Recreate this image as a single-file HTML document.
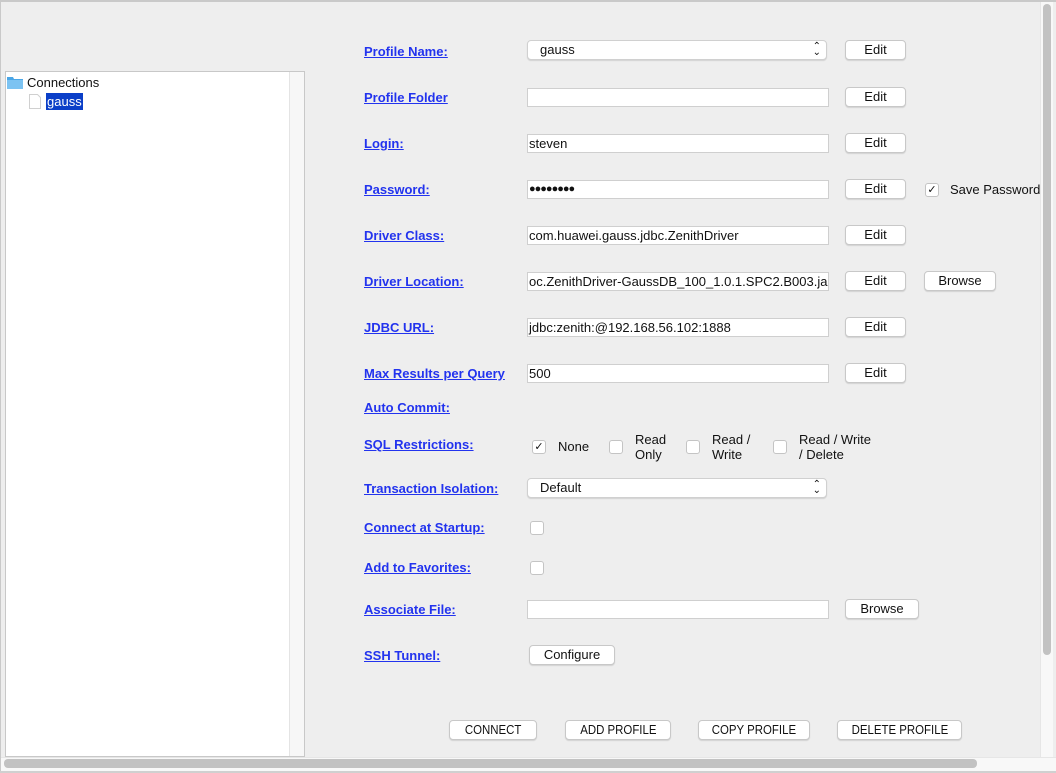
<!DOCTYPE html>
<html><head><meta charset="utf-8"><style>
*{box-sizing:border-box;margin:0;padding:0}
body{width:1056px;height:773px;background:#eeeeee;position:relative;overflow:hidden;font-family:"Liberation Sans","DejaVu Sans",sans-serif;font-size:13px;color:#111}
.a{position:absolute}
.lbl{position:absolute;left:364px;color:#2233ee;font-weight:bold;text-decoration:underline;font-size:13px;line-height:16px;white-space:nowrap}
.in{position:absolute;left:527px;width:302px;height:19px;background:#fff;border:1px solid #cfcfcf;line-height:17px;padding-left:1px;font-size:13px;white-space:nowrap;overflow:hidden}
.btn{position:absolute;height:20px;background:#fff;border:1px solid #c8c8c8;border-radius:4px;box-shadow:0 1px 1px rgba(0,0,0,.12);text-align:center;line-height:18px;font-size:13px}
.bb span{display:inline-block;transform:scaleX(.88)}
.sel{position:absolute;left:527px;width:300px;height:20px;background:#fff;border:1px solid #d0d0d0;border-radius:4px;box-shadow:0 1px 1px rgba(0,0,0,.12);line-height:18px;padding-left:12px;font-size:13px}
.sel:after{content:"⌃";position:absolute;right:5px;top:-3px;font-size:10px}
.sel:before{content:"⌄";position:absolute;right:5px;top:3px;font-size:10px}
.cb{position:absolute;width:14px;height:14px;background:#fff;border:1px solid #c4c4c4;border-radius:3px;font-size:11px;line-height:12px;text-align:center}
.t{position:absolute;font-size:13px;line-height:15px}
</style></head><body>
<div class="a" style="left:0;top:0;width:1056px;height:2px;background:#c9c9c9"></div>
<div class="a" style="left:0;top:0;width:1px;height:773px;background:#c9c9c9"></div>
<div class="a" style="left:5px;top:71px;width:300px;height:686px;background:#fff;border:1px solid #c8c8c8"></div>
<div class="a" style="left:289px;top:72px;width:15px;height:684px;background:#f7f7f7;border-left:1px solid #e4e4e4"></div>
<svg class="a" style="left:7px;top:76px" width="16" height="13" viewBox="0 0 16 13"><path d="M0 1h6l1 2h9v10H0z" fill="#4aa6e6"/><path d="M0 4h16v9H0z" fill="#7cc3f2"/></svg>
<div class="t" style="left:27px;top:75px">Connections</div>
<svg class="a" style="left:29px;top:94px" width="12" height="15" viewBox="0 0 12 15"><path d="M.5 .5h8l3 3v11H.5z" fill="#fff" stroke="#d0d0d0"/></svg>
<div class="a" style="left:46px;top:93px;width:37px;height:17px;background:#0b3fc8;color:#fff;font-size:13px;line-height:17px;padding-left:1px">gauss</div>

<div class="lbl" style="top:44px">Profile Name:</div>
<div class="lbl" style="top:90px">Profile Folder</div>
<div class="lbl" style="top:136px">Login:</div>
<div class="lbl" style="top:182px">Password:</div>
<div class="lbl" style="top:228px">Driver Class:</div>
<div class="lbl" style="top:274px">Driver Location:</div>
<div class="lbl" style="top:320px">JDBC URL:</div>
<div class="lbl" style="top:366px">Max Results per Query</div>
<div class="lbl" style="top:400px">Auto Commit:</div>
<div class="lbl" style="top:437px">SQL Restrictions:</div>
<div class="lbl" style="top:481px">Transaction Isolation:</div>
<div class="lbl" style="top:520px">Connect at Startup:</div>
<div class="lbl" style="top:560px">Add to Favorites:</div>
<div class="lbl" style="top:602px">Associate File:</div>
<div class="lbl" style="top:648px">SSH Tunnel:</div>

<div class="sel" style="top:40px">gauss</div>
<div class="in" style="top:88px"></div>
<div class="in" style="top:134px">steven</div>
<div class="in" style="top:180px;font-size:11px;letter-spacing:-1px">●●●●●●●●</div>
<div class="in" style="top:226px">com.huawei.gauss.jdbc.ZenithDriver</div>
<div class="in" style="top:272px">oc.ZenithDriver-GaussDB_100_1.0.1.SPC2.B003.jar</div>
<div class="in" style="top:318px">jdbc:zenith:@192.168.56.102:1888</div>
<div class="in" style="top:364px">500</div>
<div class="sel" style="top:478px">Default</div>
<div class="in" style="top:600px"></div>

<div class="btn" style="left:845px;top:40px;width:61px">Edit</div>
<div class="btn" style="left:845px;top:87px;width:61px">Edit</div>
<div class="btn" style="left:845px;top:133px;width:61px">Edit</div>
<div class="btn" style="left:845px;top:179px;width:61px">Edit</div>
<div class="btn" style="left:845px;top:225px;width:61px">Edit</div>
<div class="btn" style="left:845px;top:271px;width:61px">Edit</div>
<div class="btn" style="left:845px;top:317px;width:61px">Edit</div>
<div class="btn" style="left:845px;top:363px;width:61px">Edit</div>
<div class="btn" style="left:924px;top:271px;width:72px">Browse</div>
<div class="btn" style="left:845px;top:599px;width:74px">Browse</div>
<div class="btn" style="left:529px;top:645px;width:86px">Configure</div>

<div class="cb" style="left:925px;top:183px">✓</div>
<div class="t" style="left:950px;top:182px;white-space:nowrap;width:90px;overflow:hidden">Save Password</div>

<div class="cb" style="left:532px;top:440px">✓</div>
<div class="t" style="left:558px;top:439px">None</div>
<div class="cb" style="left:609px;top:440px"></div>
<div class="t" style="left:635px;top:432px">Read<br>Only</div>
<div class="cb" style="left:686px;top:440px"></div>
<div class="t" style="left:712px;top:432px">Read /<br>Write</div>
<div class="cb" style="left:773px;top:440px"></div>
<div class="t" style="left:799px;top:432px">Read / Write<br>/ Delete</div>

<div class="cb" style="left:530px;top:521px"></div>
<div class="cb" style="left:530px;top:561px"></div>

<div class="btn bb" style="left:449px;top:720px;width:88px"><span>CONNECT</span></div>
<div class="btn bb" style="left:565px;top:720px;width:106px"><span>ADD PROFILE</span></div>
<div class="btn bb" style="left:698px;top:720px;width:112px"><span>COPY PROFILE</span></div>
<div class="btn bb" style="left:837px;top:720px;width:125px"><span>DELETE PROFILE</span></div>

<div class="a" style="left:1040px;top:2px;width:13px;height:755px;background:#f8f8f8;border-left:1px solid #e6e6e6"></div>
<div class="a" style="left:1043px;top:4px;width:8px;height:651px;background:#c2c2c2;border-radius:4px"></div>
<div class="a" style="left:1px;top:757px;width:1055px;height:14px;background:#f8f8f8;border-top:1px solid #e6e6e6"></div>
<div class="a" style="left:4px;top:759px;width:973px;height:9px;background:#c2c2c2;border-radius:4px"></div>
<div class="a" style="left:0;top:771px;width:1056px;height:2px;background:#d0d0d0"></div>
</body></html>
